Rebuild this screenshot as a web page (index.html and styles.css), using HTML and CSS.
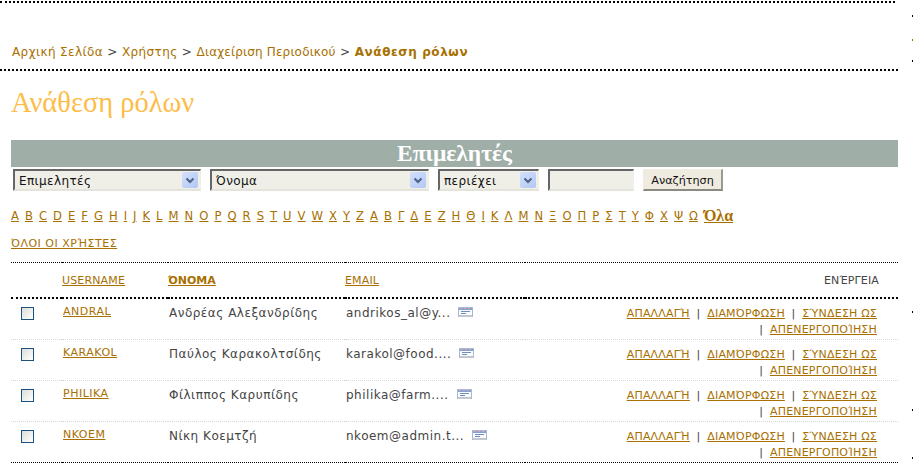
FILE: index.html
```html
<!DOCTYPE html>
<html lang="el">
<head>
<meta charset="utf-8">
<title>Ανάθεση ρόλων</title>
<link rel="stylesheet" href="styles.css">
</head>
<body>
<div class="topline"></div>
<header class="crumbs">
  <a href="#">Αρχική Σελίδα</a> &gt; <a href="#">Χρήστης</a> &gt; <a href="#" class="tight">Διαχείριση Περιοδικού</a> &gt; <a href="#" class="current">Ανάθεση ρόλων</a>
</header>
<main class="content">
  <h2 class="title">Ανάθεση ρόλων</h2>
  <h3 class="band">Επιμελητές</h3>
  <form class="filters">
    <div class="select s1"><select><option>Επιμελητές</option></select><span class="arrow"><svg width="16" height="16" viewBox="0 0 16 16"><path d="M4.5 6.5l3.5 3.5 3.5-3.5" fill="none" stroke="#4d6185" stroke-width="2"/></svg></span></div>
    <div class="select s2"><select><option>Όνομα</option></select><span class="arrow"><svg width="16" height="16" viewBox="0 0 16 16"><path d="M4.5 6.5l3.5 3.5 3.5-3.5" fill="none" stroke="#4d6185" stroke-width="2"/></svg></span></div>
    <div class="select s3"><select><option>περιέχει</option></select><span class="arrow"><svg width="16" height="16" viewBox="0 0 16 16"><path d="M4.5 6.5l3.5 3.5 3.5-3.5" fill="none" stroke="#4d6185" stroke-width="2"/></svg></span></div>
    <input class="query" type="text">
    <button class="go" type="button">Αναζήτηση</button>
  </form>
  <nav class="letters">
    <a href="#">A</a><a href="#">B</a><a href="#">C</a><a href="#">D</a><a href="#">E</a><a href="#">F</a><a href="#">G</a><a href="#">H</a><a href="#">I</a><a href="#">J</a><a href="#">K</a><a href="#">L</a><a href="#">M</a><a href="#">N</a><a href="#">O</a><a href="#">P</a><a href="#">Q</a><a href="#">R</a><a href="#">S</a><a href="#">T</a><a href="#">U</a><a href="#">V</a><a href="#">W</a><a href="#">X</a><a href="#">Y</a><a href="#">Z</a><a href="#">Α</a><a href="#">Β</a><a href="#">Γ</a><a href="#">Δ</a><a href="#">Ε</a><a href="#">Ζ</a><a href="#">Η</a><a href="#">Θ</a><a href="#">Ι</a><a href="#">Κ</a><a href="#">Λ</a><a href="#">Μ</a><a href="#">Ν</a><a href="#">Ξ</a><a href="#">Ο</a><a href="#">Π</a><a href="#">Ρ</a><a href="#">Σ</a><a href="#">Τ</a><a href="#">Υ</a><a href="#">Φ</a><a href="#">Χ</a><a href="#">Ψ</a><a href="#">Ω</a><a href="#" class="all">Όλα</a>
  </nav>
  <p class="allusers"><a href="#">ΌΛΟΙ ΟΙ ΧΡΉΣΤΕΣ</a></p>
  <table class="users">
    <colgroup><col class="c-check"><col class="c-user"><col class="c-name"><col class="c-mail"><col class="c-act"></colgroup>
    <thead>
      <tr><th></th><th><a href="#">USERNAME</a></th><th><a href="#" class="sorted">ΌΝΟΜΑ</a></th><th><a href="#">EMAIL</a></th><th class="act-head">ΕΝΈΡΓΕΙΑ</th></tr>
    </thead>
    <tbody>
      <tr>
        <td><span class="check"></span></td>
        <td class="user"><a href="#">ANDRAL</a></td>
        <td class="text">Ανδρέας Αλεξανδρίδης</td>
        <td class="text">andrikos_al@y...<svg class="mail" width="15" height="10" viewBox="0 0 15 10"><path d="M0 0h15v10H0z" fill="#a9bad0"/><path d="M1 1h13v8H1z" fill="#f8fafc"/><path d="M1 1h13v2H1z" fill="#7fa3d6"/><path d="M2 1h2v1H2zM6 1h2v1H6zM10 1h2v1h-2z" fill="#ef9aa6"/><path d="M3 4h9v1H3zM3 6h5v1H3z" fill="#6f8fb8"/><path d="M1 8h13v2H1z" fill="#c3c8d0"/></svg></td>
        <td class="actions"><a href="#">ΑΠΑΛΛΑΓΉ</a> <span class="sep">|</span> <a href="#">ΔΙΑΜΌΡΦΩΣΗ</a> <span class="sep">|</span> <a href="#">ΣΎΝΔΕΣΗ ΩΣ</a><br><span class="sep">|</span> <a href="#">ΑΠΕΝΕΡΓΟΠΟΊΗΣΗ</a></td>
      </tr>
      <tr>
        <td><span class="check"></span></td>
        <td class="user"><a href="#">KARAKOL</a></td>
        <td class="text">Παύλος Καρακολτσίδης</td>
        <td class="text">karakol@food....<svg class="mail" width="15" height="10" viewBox="0 0 15 10"><path d="M0 0h15v10H0z" fill="#a9bad0"/><path d="M1 1h13v8H1z" fill="#f8fafc"/><path d="M1 1h13v2H1z" fill="#7fa3d6"/><path d="M2 1h2v1H2zM6 1h2v1H6zM10 1h2v1h-2z" fill="#ef9aa6"/><path d="M3 4h9v1H3zM3 6h5v1H3z" fill="#6f8fb8"/><path d="M1 8h13v2H1z" fill="#c3c8d0"/></svg></td>
        <td class="actions"><a href="#">ΑΠΑΛΛΑΓΉ</a> <span class="sep">|</span> <a href="#">ΔΙΑΜΌΡΦΩΣΗ</a> <span class="sep">|</span> <a href="#">ΣΎΝΔΕΣΗ ΩΣ</a><br><span class="sep">|</span> <a href="#">ΑΠΕΝΕΡΓΟΠΟΊΗΣΗ</a></td>
      </tr>
      <tr>
        <td><span class="check"></span></td>
        <td class="user"><a href="#">PHILIKA</a></td>
        <td class="text">Φίλιππος Καρυπίδης</td>
        <td class="text">philika@farm....<svg class="mail" width="15" height="10" viewBox="0 0 15 10"><path d="M0 0h15v10H0z" fill="#a9bad0"/><path d="M1 1h13v8H1z" fill="#f8fafc"/><path d="M1 1h13v2H1z" fill="#7fa3d6"/><path d="M2 1h2v1H2zM6 1h2v1H6zM10 1h2v1h-2z" fill="#ef9aa6"/><path d="M3 4h9v1H3zM3 6h5v1H3z" fill="#6f8fb8"/><path d="M1 8h13v2H1z" fill="#c3c8d0"/></svg></td>
        <td class="actions"><a href="#">ΑΠΑΛΛΑΓΉ</a> <span class="sep">|</span> <a href="#">ΔΙΑΜΌΡΦΩΣΗ</a> <span class="sep">|</span> <a href="#">ΣΎΝΔΕΣΗ ΩΣ</a><br><span class="sep">|</span> <a href="#">ΑΠΕΝΕΡΓΟΠΟΊΗΣΗ</a></td>
      </tr>
      <tr>
        <td><span class="check"></span></td>
        <td class="user"><a href="#">NKOEM</a></td>
        <td class="text">Νίκη Κοεμτζή</td>
        <td class="text">nkoem@admin.t...<svg class="mail" width="15" height="10" viewBox="0 0 15 10"><path d="M0 0h15v10H0z" fill="#a9bad0"/><path d="M1 1h13v8H1z" fill="#f8fafc"/><path d="M1 1h13v2H1z" fill="#7fa3d6"/><path d="M2 1h2v1H2zM6 1h2v1H6zM10 1h2v1h-2z" fill="#ef9aa6"/><path d="M3 4h9v1H3zM3 6h5v1H3z" fill="#6f8fb8"/><path d="M1 8h13v2H1z" fill="#c3c8d0"/></svg></td>
        <td class="actions"><a href="#">ΑΠΑΛΛΑΓΉ</a> <span class="sep">|</span> <a href="#">ΔΙΑΜΌΡΦΩΣΗ</a> <span class="sep">|</span> <a href="#">ΣΎΝΔΕΣΗ ΩΣ</a><br><span class="sep">|</span> <a href="#">ΑΠΕΝΕΡΓΟΠΟΊΗΣΗ</a></td>
      </tr>
    </tbody>
  </table>
</main>
<i class="speck y15"></i><i class="speck y39"></i><i class="speck y60"></i><i class="speck y311"></i><i class="speck y409"></i><i class="speck y457"></i>
</body>
</html>
```
FILE: styles.css
```css
html, body { margin: 0; padding: 0; background: #fff; }
body { position: relative; font-family: "DejaVu Sans", Verdana, sans-serif; font-size: 11px; color: #444; overflow: hidden; height: 465px; width: 913px; }
a { color: #a87000; }
.topline { width: 895px; margin-top: 1px; border-top: 2px dotted #000; }
.crumbs { box-sizing: border-box; width: 898px; height: 68px; border-bottom: 2px dotted #000; padding: 41px 0 0 12px; font-size: 12px; line-height: 16px; letter-spacing: .4px; }
.crumbs a { text-decoration: none; }
.crumbs .tight { letter-spacing: .17px; }
.crumbs .current { font-weight: bold; letter-spacing: .6px; }
.content { box-sizing: border-box; width: 898px; padding-left: 11px; }
.title { box-sizing: border-box; margin: 0; padding-top: 16px; font: normal 28.5px/32px "Liberation Serif", serif; color: #fdbd48; height: 69px; }
.band { margin: 0; height: 27px; background: #a0aea8; color: #fff; text-align: center; font: bold 23.5px/27px "Liberation Serif", serif; }
.filters { display: flex; align-items: stretch; height: 22px; margin: 2px 0 0 2px; }
.select { position: relative; box-sizing: border-box; margin-right: 9px; }
.s1 { width: 188px; } .s2 { width: 219px; } .s3 { width: 101px; }
.select select { appearance: none; width: 100%; height: 100%; box-sizing: border-box; border: 0; border-top: 2px solid #666; border-left: 2px solid #666; border-right: 1px solid #eeeee6; border-bottom: 2px solid #e4e4dc; background: #efefe8; padding: 2px 0 0 4px; font: 12px "DejaVu Sans", sans-serif; letter-spacing: .4px; color: #111; border-radius: 0; }
.arrow { position: absolute; right: 3px; top: 3px; width: 16px; height: 16px; border-radius: 2px; background: linear-gradient(135deg, #d3e0fb, #b2c7f5); display: block; }
.arrow svg { display: block; }
.query { box-sizing: border-box; width: 86px; margin: 0 9px 0 0; border: 0; border-top: 2px solid #666; border-left: 2px solid #666; border-right: 1px solid #eeeee6; border-bottom: 2px solid #e4e4dc; background: #efefe8; padding: 0; }
.go { box-sizing: border-box; width: 80px; padding: 1px 0 0; border: 1px solid #efebe0; border-right: 2px solid #9a9a90; border-bottom: 2px solid #8a8a80; background: #efebe0; font: 11.2px "DejaVu Sans", sans-serif; color: #111; }
.letters { margin-top: 17px; display: flex; gap: 6px; font-size: 11.6px; line-height: 16px; }
.letters .all { font: bold 16px/16px "Liberation Serif", serif; }
.allusers { margin: 12px 0 0; font-size: 11px; letter-spacing: .5px; line-height: 16px; }
.users { border-collapse: collapse; width: 887px; margin-top: 10px; table-layout: fixed; border-top: 1px dotted #000; border-bottom: 1px dotted #000; }
.c-check { width: 51px; } .c-user { width: 106px; } .c-name { width: 177px; } .c-mail { width: 180px; }
.users th { height: 34px; padding: 0; text-align: left; font-weight: normal; font-size: 11px; letter-spacing: .15px; border-bottom: 2px dotted #000; }
.users th .sorted { font-weight: bold; letter-spacing: 0; }
.users th.act-head { text-align: right; padding-right: 19px; color: #444; }
.users td { height: 40px; padding: 0; vertical-align: top; font-size: 12px; line-height: 16px; border-bottom: 1px dotted #d8d8d0; }
.users td.text { padding: 6px 0 0 1px; height: 34px; letter-spacing: .5px; }
.users tr:last-child td { border-bottom: 0; }
.users td.user { font-size: 11px; letter-spacing: .5px; padding: 5px 0 0 1px; height: 35px; }
.users td.actions { padding: 7px 21px 0 0; height: 33px; text-align: right; font-size: 11px; letter-spacing: .2px; }
.sep { margin: 0 3px; }
.check { display: block; box-sizing: border-box; width: 13px; height: 13px; margin: 8px 0 0 10px; border: 1px solid #1c5180; background: linear-gradient(135deg, #dcdcd7, #fff); }
.mail { margin: 2px 0 0 8px; vertical-align: top; }
.speck { position: absolute; left: 912px; width: 1px; height: 2px; background: #000; }
.y15 { top: 15px; } .y39 { top: 39px; background: #a87000; } .y60 { top: 60px; } .y311 { top: 311px; } .y409 { top: 409px; } .y457 { top: 457px; }
```
